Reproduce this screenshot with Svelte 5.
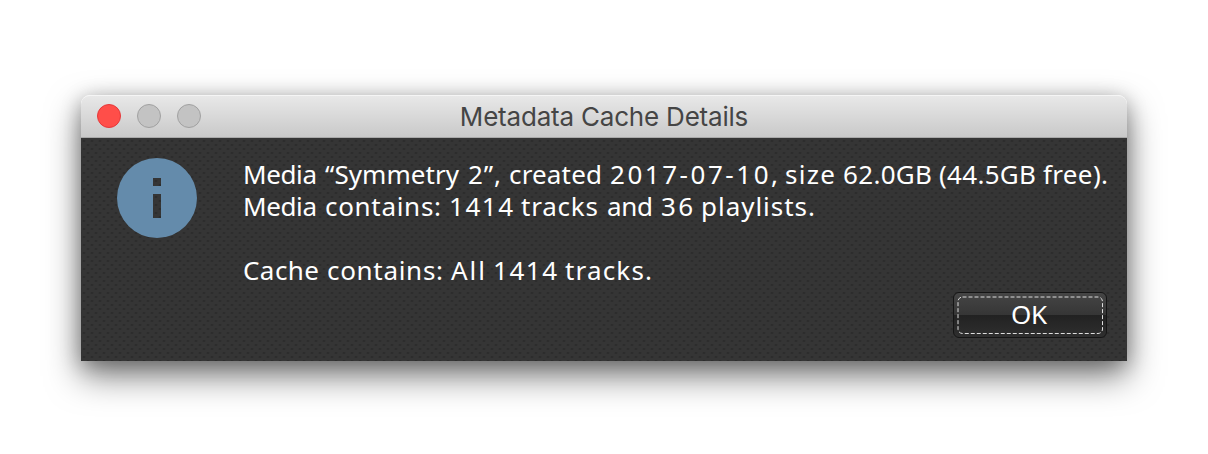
<script>
  // Each word carries its start and advance width inside the message column.
  const lines = [
    [
      ['Media', 0, 74], ['“Symmetry', 82, 134], ['2”,', 225, 33], ['created', 266, 93], ['2017-07-10,', 367, 168],
      ['size', 542, 50], ['62.0GB', 600, 89], ['(44.5GB', 696, 97], ['free).', 800, 65]
    ],
    [
      ['Media', 0, 74], ['contains:', 82, 116], ['1414', 206, 64], ['tracks', 278, 77],
      ['and', 364, 46], ['36', 418, 32], ['playlists.', 458, 114]
    ],
    [],
    [['Cache', 0, 76], ['contains:', 84, 116], ['All', 208, 34], ['1414', 250, 64], ['tracks.', 322, 87]]
  ];
</script>

<main>
  <section class="window">
    <header>
      <div class="lights"><i class="close"></i><i></i><i></i></div>
      <h1>Metadata Cache Details</h1>
    </header>
    <div class="content">
      <svg class="info" width="80" height="80" viewBox="0 0 80 80">
        <path fill="#648bab" fill-rule="evenodd" d="M40 0a40 40 0 1 0 0 80a40 40 0 1 0 0-80zM36 20h8v8h-8zM36 36h8v24h-8z" />
      </svg>
      <div class="message">
        {#each lines as words}
          <svg class="line" width="870" height="32">
            {#each words as [word, x, width]}
              <text {x} y="26" textLength={width}>{word}</text>
            {/each}
          </svg>
        {/each}
        <button>
          <svg class="focus" width="146" height="38"><rect x="1" y="1" width="144.5" height="36.5" rx="4.5" /></svg>
          <span>OK</span>
        </button>
      </div>
    </div>
  </section>
</main>

<style>
  :global(body) { margin: 0; background: #fff; }
  main { box-sizing: border-box; width: 1208px; height: 454px; padding: 95px 81px 0; overflow: hidden; }
  .window {
    width: 1046px; height: 266px; border-radius: 9px 9px 0 0;
    box-shadow: 0 15px 34px rgba(0, 0, 0, 0.5), 0 4px 20px rgba(0, 0, 0, 0.27);
  }
  header {
    box-sizing: border-box; height: 43px; display: grid; grid-template-columns: 120px 1fr 120px; align-items: center;
    background: linear-gradient(#e8e8e8, #c9c9c9); border-top: 1px solid #f5f5f5; border-bottom: 1px solid #a9a9a9;
    border-radius: 9px 9px 0 0;
  }
  .lights { display: flex; gap: 16px; padding: 0 0 2px 16px; }
  .lights i { box-sizing: border-box; width: 24px; height: 24px; border-radius: 50%; background: #c3c3c3; border: 1px solid #a1a1a1; }
  .lights .close { background: #ff4e49; border-color: #e5383a; }
  h1 { margin: 0; text-align: center; font: 400 26px/40px Inter, sans-serif; letter-spacing: -0.2px; color: #454545; }
  .content {
    box-sizing: border-box; height: 223px; padding: 20px 20px 0 36px; display: flex; gap: 46px;
    background:
      radial-gradient(ellipse 2px 1.5px at 3px 3px, #2d2d2d 0 40%, transparent 100%) 0 0 / 8px 8px,
      radial-gradient(ellipse 2px 1.5px at 3px 3px, #2d2d2d 0 40%, transparent 100%) 4px 4px / 8px 8px,
      #353535;
  }
  .info { flex: none; }
  .message { flex: 1; display: flex; flex-direction: column; min-width: 0; }
  .line { display: block; flex: none; overflow: visible; }
  .line text { font: 400 26px "Noto Sans", sans-serif; fill: #fff; }
  button {
    box-sizing: border-box; width: 154px; height: 46px; margin: 6px 0 0; align-self: flex-end; padding: 0;
    display: grid; place-items: center; color: #fff; font: 400 26px/36px "Noto Sans", sans-serif;
    border: 1px solid #151515; border-radius: 6px;
    background: linear-gradient(#454545, #363636 50%, #222 51%, #2f2f2f);
  }
  .focus, button span { grid-area: 1 / 1; }
  .focus rect { fill: none; stroke: #ddd; stroke-width: 1; stroke-dasharray: 4 2; }
  button span { letter-spacing: -0.3px; padding: 0 2px 2px 0; }
</style>
